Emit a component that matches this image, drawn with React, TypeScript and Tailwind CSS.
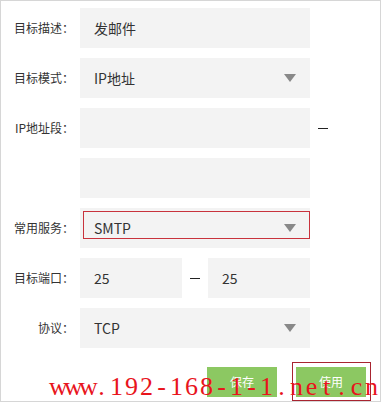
import React from 'react';

const FONT = "font-['Microsoft_YaHei','Noto_Sans_CJK_SC','Noto_Sans',sans-serif]";

const Caret: React.FC = () => (
  <svg width="12" height="8" viewBox="0 0 12 8" className="absolute right-[14px] top-1/2 -translate-y-1/2">
    <polygon points="0,0 12,0 6,8" fill="#888888" />
  </svg>
);

const Label: React.FC<{ text: string }> = ({ text }) => (
  <div className="w-[73px] shrink-0 text-right text-[12px] text-[#333]">{text}</div>
);

const Field: React.FC<{ value?: string; select?: boolean; width?: string; children?: React.ReactNode }> = ({ value, select, width = 'w-[230px]', children }) => (
  <div className={`relative ${width} h-10 bg-[#f3f3f3] flex items-center pl-[14px] text-[14px] text-[#333]`}>
    {value}
    {select && <Caret />}
    {children}
  </div>
);

const Dash: React.FC = () => <div className="w-[10px] h-px bg-[#222] mx-[2px]" />;

const WATERMARK = 'www.192-168-1-1.net.cn';

export default function App() {
  return (
    <div className={`w-[383px] h-[403px] bg-white ${FONT}`}>
      <div className="relative w-[381px] h-[402px] border border-[#d6d6d6] pt-[7px] overflow-hidden">
        <div className="flex flex-col gap-[10px]">
          <div className="flex items-center h-10 gap-[6px]">
            <Label text="目标描述：" />
            <Field value="发邮件" />
          </div>
          <div className="flex items-center h-10 gap-[6px]">
            <Label text="目标模式：" />
            <Field value="IP地址" select />
          </div>
          <div className="flex items-center h-10 gap-[6px]">
            <Label text="IP地址段：" />
            <Field />
            <Dash />
          </div>
          <div className="flex items-center h-10 gap-[6px]">
            <div className="w-[73px] shrink-0" />
            <Field />
          </div>
          <div className="flex items-center h-10 gap-[6px]">
            <Label text="常用服务：" />
            <Field value="SMTP" select>
              <div className="absolute left-[3px] top-[3px] w-[227px] h-[28px] border border-[#c8323c]" />
            </Field>
          </div>
          <div className="flex items-center h-10 gap-[6px]">
            <Label text="目标端口：" />
            <Field value="25" width="w-[102px]" />
            <Dash />
            <Field value="25" width="w-[102px]" />
          </div>
          <div className="flex items-center h-10 gap-[6px]">
            <Label text="协议：" />
            <Field value="TCP" select />
          </div>
        </div>

        <div className="flex gap-[19px] ml-[206px] mt-[19px]">
          <div className="w-[70px] h-[30px] bg-[#8cc862] text-white text-[12px] flex items-center justify-center">保存</div>
          <div className="w-[70px] h-[30px] bg-[#8cc862] text-white text-[12px] flex items-center justify-center">使用</div>
        </div>

        <div className="absolute left-[291px] top-[361px] w-[79px] h-[39px] border border-[#a82430]" />

        <div className="absolute left-[48px] top-[373px] flex text-[26px] leading-[26px] text-[#e8141c] font-['Liberation_Serif',serif] whitespace-nowrap">
          {WATERMARK.split('').map((c, i) => (
            <span key={i} className="w-[15px] text-center">{c}</span>
          ))}
        </div>
      </div>
    </div>
  );
}
